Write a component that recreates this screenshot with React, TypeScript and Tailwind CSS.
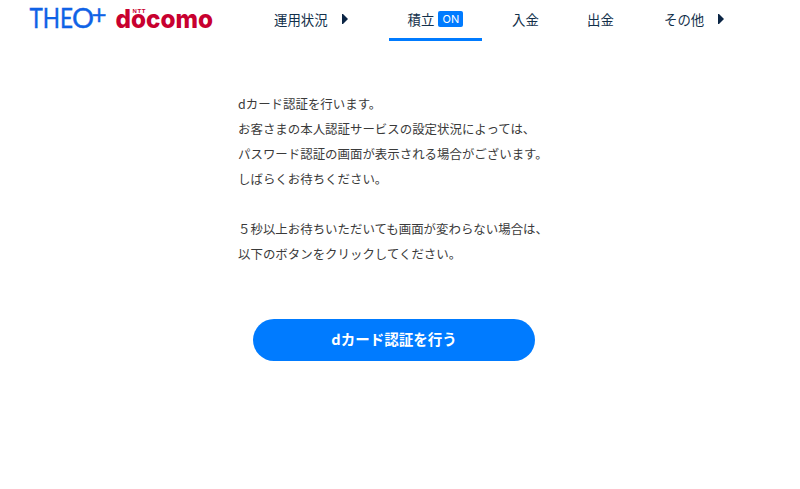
const Caret = ({ className = '' }: { className?: string }) => (
  <svg viewBox="0 0 6 10" className={`h-[10px] w-[6px] fill-[#0b2545] ${className}`}>
    <path d="M0 0 L1 0 L6 5 L1 10 L0 10 Z" />
  </svg>
);

const Logo = () => (
  <div className="ml-[30px] flex w-[244px] shrink-0">
    <svg viewBox="0 0 190 40" className="h-[40px] w-[190px] overflow-visible" role="img" aria-label="THEO+ docomo">
      <g fontFamily="Lato, sans-serif" fill="#0f62e6" stroke="#0f62e6" strokeWidth="0.4">
        <text x="-0.5" y="28" fontSize="26" textLength="43.5" lengthAdjust="spacingAndGlyphs">
          THE
        </text>
        <text x="42" y="28" fontSize="26" textLength="22" lengthAdjust="spacingAndGlyphs">
          O
        </text>
        <text x="61.5" y="23.5" fontSize="26">
          +
        </text>
      </g>
      <text x="85.5" y="28" fontSize="26" fontWeight="800" fontFamily="Inter, sans-serif" fill="#c8002f" textLength="97.5" lengthAdjust="spacingAndGlyphs">
        docomo
      </text>
      <text x="102.5" y="12.5" fontSize="6" fontWeight="700" fontFamily="Liberation Sans, sans-serif" fill="#c8002f" textLength="13">
        NTT
      </text>
    </svg>
  </div>
);

export default function App() {
  return (
    <div className="min-h-[489px] bg-white font-['Noto_Sans_CJK_JP',sans-serif] text-[#3a3a3a]">
      <header className="flex h-[41px] items-start">
        <Logo />
        <nav className="flex text-[13.4px] leading-[38px] text-[#12304b]">
          <div className="flex h-[38px] w-[115px] items-center">
            運用状況
            <Caret className="ml-[14px]" />
          </div>
          <div className="flex h-[41px] w-[93px] items-center justify-center border-b-[3px] border-[#007bff]">
            積立
            <span className="ml-1 flex h-4 w-[25px] items-center justify-center rounded-[2px] bg-[#007bff] font-[Inter] text-[11px] leading-none text-white">
              ON
            </span>
          </div>
          <div className="ml-[30px] w-[75px]">入金</div>
          <div className="w-[77px]">出金</div>
          <div className="flex h-[38px] items-center">
            その他
            <Caret className="ml-[14px]" />
          </div>
        </nav>
      </header>

      <main className="pt-[51px]">
        <div className="ml-[238px] text-[12.45px] leading-[25px]">
          <p>
            dカード認証を行います。
            <br />
            お客さまの本人認証サービスの設定状況によっては、
            <br />
            パスワード認証の画面が表示される場合がございます。
            <br />
            しばらくお待ちください。
          </p>
          <p className="mt-[25px]">
            ５秒以上お待ちいただいても画面が変わらない場合は、
            <br />
            以下のボタンをクリックしてください。
          </p>
        </div>
        <button className="mt-[52px] ml-[253px] block h-[42px] w-[282px] rounded-full bg-[#007bff] pb-0.5 text-[14.5px] font-bold text-white">
          dカード認証を行う
        </button>
      </main>
    </div>
  );
}
